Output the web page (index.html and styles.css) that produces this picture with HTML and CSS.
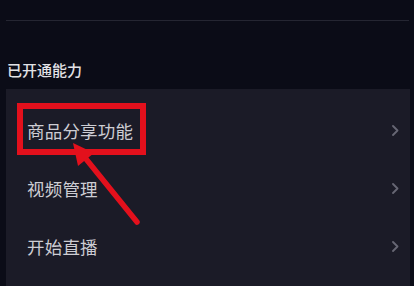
FILE: index.html
```html
<!DOCTYPE html>
<html lang="zh-CN">
<head>
<meta charset="utf-8">
<title>已开通能力</title>
<link rel="stylesheet" href="styles.css">
</head>
<body>
<div class="page">
  <div class="divider"></div>
  <div class="section-title">已开通能力</div>
  <div class="card">
    <div class="row">
      <span class="label">商品分享功能</span>
      <svg class="chev" viewBox="0 0 7 11" width="7" height="11"><polyline points="1,1 5.5,5.5 1,10" fill="none" stroke="#676774" stroke-width="1.8" stroke-linecap="round" stroke-linejoin="round"/></svg>
      <div class="highlight"></div>
    </div>
    <div class="row">
      <span class="label">视频管理</span>
      <svg class="chev" viewBox="0 0 7 11" width="7" height="11"><polyline points="1,1 5.5,5.5 1,10" fill="none" stroke="#676774" stroke-width="1.8" stroke-linecap="round" stroke-linejoin="round"/></svg>
    </div>
    <div class="row">
      <span class="label">开始直播</span>
      <svg class="chev" viewBox="0 0 7 11" width="7" height="11"><polyline points="1,1 5.5,5.5 1,10" fill="none" stroke="#676774" stroke-width="1.8" stroke-linecap="round" stroke-linejoin="round"/></svg>
    </div>
  </div>
</div>
<svg class="arrow" viewBox="0 0 414 286" width="414" height="286">
  <line x1="137" y1="222" x2="82" y2="154" stroke="#e3101c" stroke-width="5.5" stroke-linecap="round"/>
  <polygon points="73,143 94,153 78,166" fill="#e3101c"/>
</svg>
</body>
</html>
```

FILE: styles.css
```css
html, body {
  margin: 0;
  padding: 0;
}
body {
  width: 414px;
  height: 286px;
  overflow: hidden;
  background: #0b0c17;
  font-family: "Noto Sans CJK SC", "Noto Sans", sans-serif;
  position: relative;
}
.page {
  padding: 20px 4px 0 6px;
}
.divider {
  height: 1px;
  background: #252632;
  margin-right: 1px;
}
.section-title {
  margin-top: 39px;
  padding-left: 1px;
  font-size: 15px;
  font-weight: 500;
  line-height: 20px;
  color: #e2e2e6;
}
.card {
  margin-top: 9px;
  background: #1b1b27;
  padding-top: 12px;
  height: 190px;
}
.row {
  position: relative;
  height: 58px;
  display: flex;
  align-items: center;
  justify-content: space-between;
  padding: 0 11px 0 21px;
}
.label {
  font-size: 17.5px;
  color: #cdcdd3;
  letter-spacing: 0.2px;
}
.chev {
  display: block;
}
.highlight {
  position: absolute;
  left: 11px;
  top: 2px;
  width: 117px;
  height: 40px;
  border: 6px solid #e3101c;
}
.arrow {
  position: absolute;
  left: 0;
  top: 0;
  pointer-events: none;
}
```
